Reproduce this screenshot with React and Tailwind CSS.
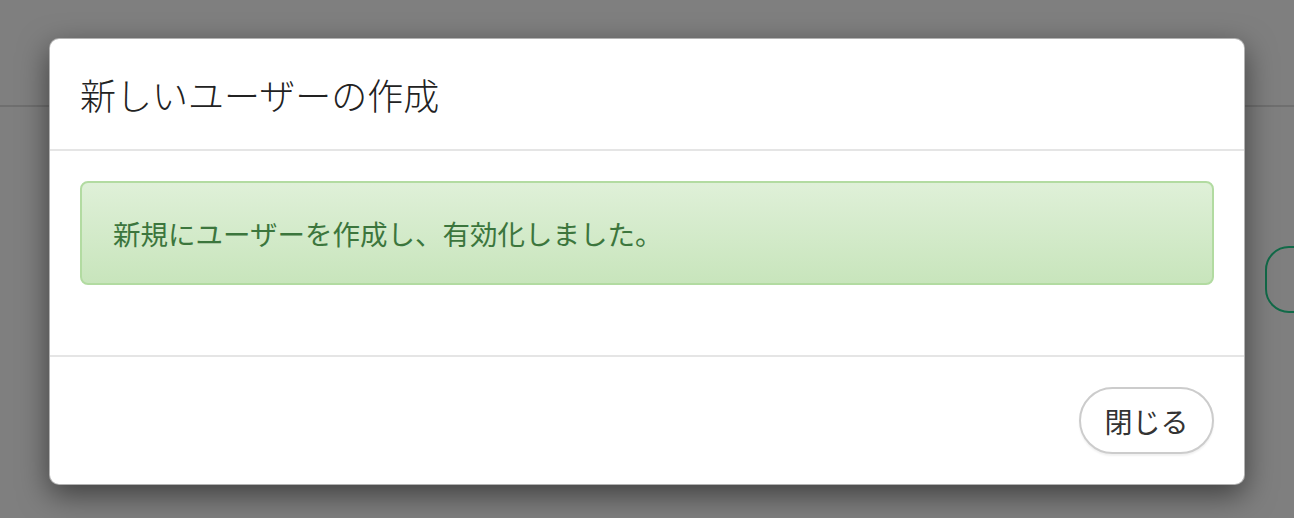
export default function App() {
  const font = { fontFamily: '"Noto Sans CJK JP", "Noto Sans", sans-serif' };
  return (
    <div className="relative w-full h-[518px] overflow-hidden bg-white" style={font}>
      {/* page behind the backdrop */}
      <div className="h-[107px] border-b-2 border-[#dedede]" />
      <div className="flex justify-end pt-[139px]">
        <div className="w-[80px] h-[67px] -mr-[51px] rounded-[24px] border-2 border-[#22d591]" />
      </div>

      {/* backdrop */}
      <div className="absolute inset-0 bg-black/50" />

      {/* modal */}
      <div className="absolute inset-0 pt-[38px]">
        <div className="mx-auto w-[1196px] bg-white rounded-[10px] border border-black/30 shadow-[0_10px_30px_rgba(0,0,0,0.5)] overflow-hidden">
          <div className="px-[30px] pt-[30px] pb-[29px] border-b-2 border-[#e5e5e5]">
            <h4 className="text-[36px] leading-[51px] font-light text-[#222]">新しいユーザーの作成</h4>
          </div>
          <div className="p-[30px]">
            <div className="mb-[40px] rounded-[8px] border-2 border-[#b2dba1] bg-linear-to-b from-[#dff0d8] to-[#c8e5bc] px-[31px] py-[30px] text-[27.5px] leading-[40px] text-[#3c763d]">
              新規にユーザーを作成し、有効化しました。
            </div>
          </div>
          <div className="flex justify-end border-t-2 border-[#e5e5e5] p-[30px]">
            <button className="h-[67px] w-[135px] rounded-full border-2 border-[#cccccc] bg-white text-[28px] text-[#333] shadow-[0_2px_2px_rgba(0,0,0,0.06)]">
              閉じる
            </button>
          </div>
        </div>
      </div>
    </div>
  );
}
